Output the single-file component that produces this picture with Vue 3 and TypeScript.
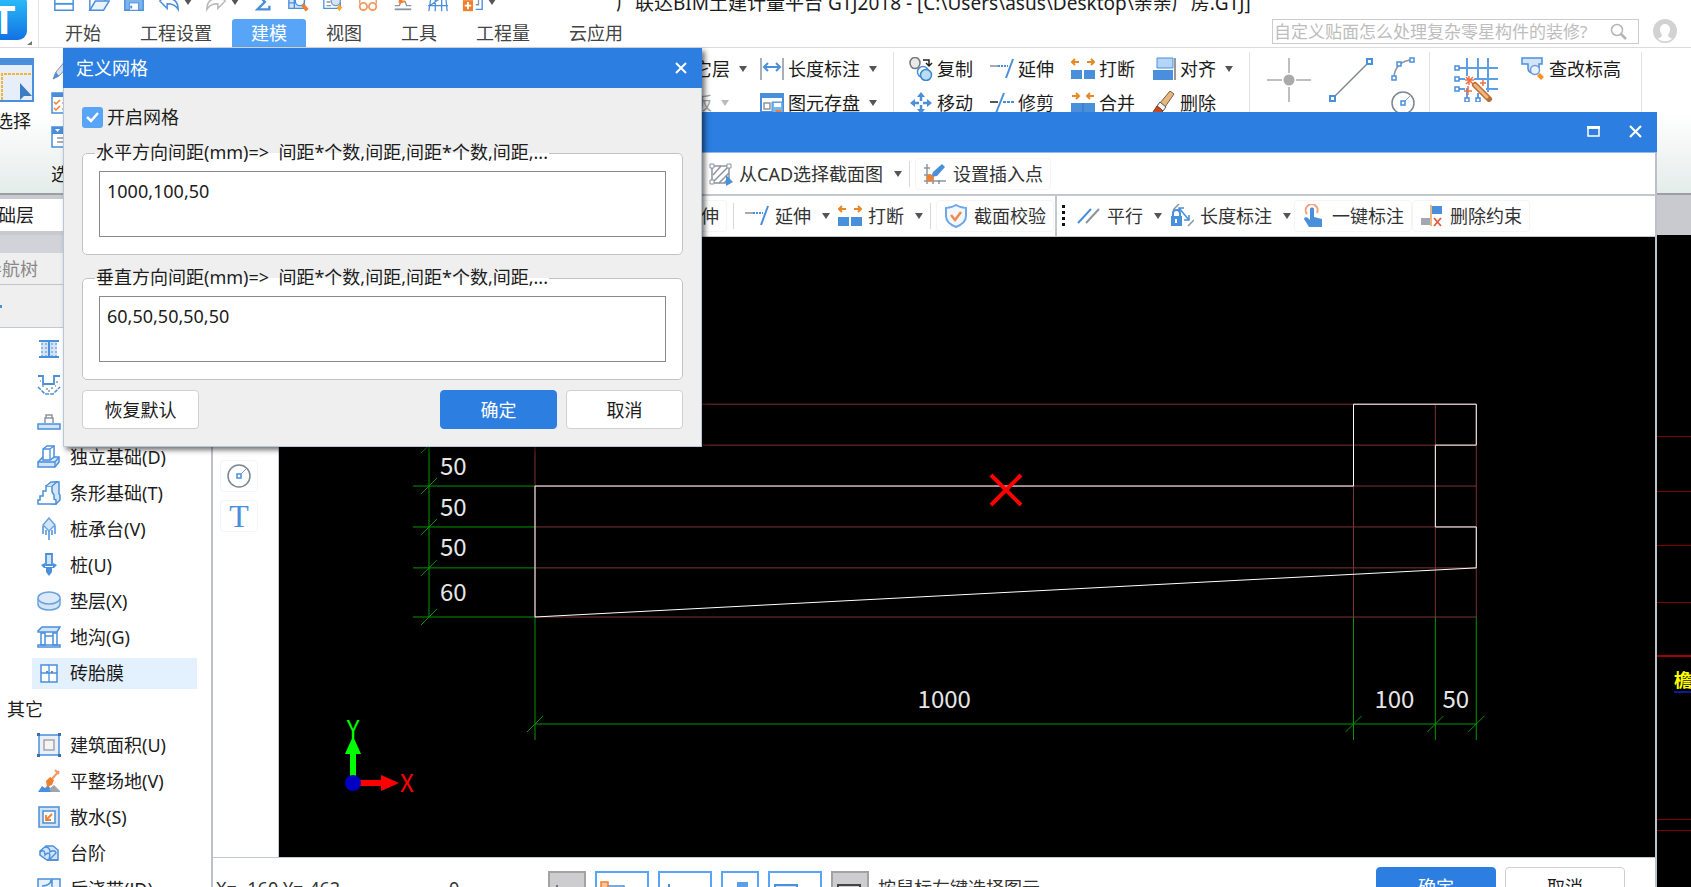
<script setup lang="ts">
import { computed, ref } from 'vue'

interface Tool {
  icon?: string
  label: string
  menu?: boolean
  disabled?: boolean
}

const B = '#4a8fdc'
const L = '#d3e4f7'
const O = '#f07f2e'
const G = '#8c959e'

const nodeSquare = (x: number, y: number) =>
  `<rect x="${x - 2}" y="${y - 2}" width="4" height="4" fill="#fff" stroke="${B}" stroke-width="1.5"/>`

const icons: Record<string, string> = {
  newFile: `<path d="M2 3h20v18H2z" fill="#fff" stroke="${B}" stroke-width="1.6"/><path d="M2 14h20" stroke="${B}" stroke-width="2"/>`,
  open: `<path d="M2 21V3h9l2 4h6v4" fill="none" stroke="${B}" stroke-width="1.6"/><path d="M2 21l6-10h15l-6 10z" fill="#eaf3fc" stroke="${B}" stroke-width="1.6"/>`,
  save: `<path d="M2 2h20v19H2z" fill="#7db4ee" stroke="${B}" stroke-width="1.6"/><path d="M7 13h10v8H7z" fill="#fff" stroke="${B}"/><path d="M9 16v3" stroke="${B}" stroke-width="2"/>`,
  undo: `<path d="M22 20c0-8-4-12-12-12V3L2 11l8 8v-5c5 0 9 1 12 6z" fill="#fff" stroke="${B}" stroke-width="1.6"/>`,
  redo: `<path d="M2 20c0-8 4-12 12-12V3l8 8-8 8v-5c-5 0-9 1-12 6z" fill="#fff" stroke="#b8b8b8" stroke-width="1.6"/>`,
  sum: `<path d="M19 6V3H6l8 9-8 8h13v-4" fill="none" stroke="${B}" stroke-width="2.6"/>`,
  tableFind: `<path d="M2 2h17v17H2zM2 13h17M8 2v17" fill="${L}" stroke="${B}" stroke-width="1.5"/><circle cx="14" cy="11" r="5" fill="#fff" stroke="${B}" stroke-width="1.5"/><path d="M17 15l5 6" stroke="${O}" stroke-width="4"/>`,
  docFind: `<path d="M2 2h18v17H2z" fill="#fff" stroke="${B}" stroke-width="1.4"/><path d="M5 8h5M5 12h4M5 16h5" stroke="${G}" stroke-width="1.5"/><circle cx="15" cy="11" r="5" fill="${L}" stroke="#7a9cc8" stroke-width="1.5"/><path d="M19 15l3 3-3 4-3-4z" fill="#f5a623"/>`,
  glasses: `<path d="M3 8V2h18v6" fill="none" stroke="#b8b8b8"/><circle cx="7" cy="17" r="4" fill="#fff" stroke="#f29a63" stroke-width="2"/><circle cx="17" cy="17" r="4" fill="#fff" stroke="#f29a63" stroke-width="2"/><path d="M3 14V8h4M21 14V8h-4" fill="none" stroke="#f29a63" stroke-width="1.5"/>`,
  stamp: `<path d="M3 16h5l2-5M21 16h-5l-2-5" fill="none" stroke="${G}" stroke-width="1.5"/><path d="M3 20h18" stroke="${G}" stroke-width="2"/><path d="M8 13l9-11M8 13l1-6M8 13l6-2" fill="none" stroke="${O}" stroke-width="2"/>`,
  mesh: `<path d="M2 22L5 2M9 22V2M16 22V2M22 22L20 2M1 9h22M1 16h22M3 16l13-9" fill="none" stroke="${B}" stroke-width="1.4"/>`,
  addBlock: `<path d="M1 10h11v12H1z" fill="${O}"/><path d="M6.5 12v8M3 16h7" stroke="#fff" stroke-width="2"/><path d="M15 20h7V2" fill="none" stroke="${B}" stroke-width="1.5"/><path d="M15 15h3V5" fill="none" stroke="${G}" stroke-width="1.5"/>`,
  brush: `<path d="M2 22l3-7L15 3l4 4L8 19z" fill="#dfe4ea" stroke="#89929b"/><path d="M2 22l3-7 3 4z" fill="${B}"/>`,
  checks: `<path d="M1 2h22v20H1z" fill="#fff" stroke="${B}" stroke-width="1.5"/><path d="M1 2h22v4H1z" fill="${B}"/><path d="M3 11l2 2 4-4M3 17l2 2 4-4" fill="none" stroke="${O}" stroke-width="1.5"/><path d="M11 12h9M11 18h9" stroke="${G}"/>`,
  listBox: `<path d="M1 2h22v20H1z" fill="#fff" stroke="${B}" stroke-width="1.5"/><path d="M1 2h22v7H1z" fill="${B}"/><path d="M4 4h5l-2.5 3z" fill="#fff"/><path d="M6 13h14M6 17h14" stroke="${G}" stroke-width="1.5"/>`,
  length: `<path d="M1 1v22M23 1v22" stroke="${G}" stroke-width="1.5"/><path d="M5 10h14M8 6l-4 4 4 4M16 6l4 4-4 4" fill="none" stroke="${B}" stroke-width="2"/>`,
  store: `<path d="M1 3h22v18H1z" fill="#fff" stroke="${B}" stroke-width="2"/><path d="M1 2h22v5H1z" fill="${B}"/><path d="M4 12h6v6H4z" fill="none" stroke="${G}" stroke-width="1.5"/><path d="M12 11h11v12H12z" fill="#7db4ee" stroke="${B}"/><path d="M14 12h7v4h-7z" fill="#fff"/><path d="M16 19h5v4h-5z" fill="${O}"/>`,
  copy: `<ellipse cx="6" cy="6" rx="5" ry="5.5" fill="#e8e8e8" stroke="#777" stroke-width="1.5"/><path d="M14 3h6v5M17 6l3 3 3-3" fill="none" stroke="#222" stroke-width="1.5"/><circle cx="14" cy="15" r="5.5" fill="#fff" stroke="${B}" stroke-width="1.5"/><circle cx="17" cy="18" r="5.5" fill="#b9dcf5" stroke="#3d88c9" stroke-width="1.5"/>`,
  move: `<path d="M12 1l4 5h-8zM12 23l4-5h-8zM1 12l5-4v8zM23 12l-5-4v8z" fill="${B}"/><path d="M12 4v6M12 14v6M4 12h6M14 12h6" stroke="${B}" stroke-width="2.5"/>`,
  extend: `<path d="M0 9h8" stroke="#a5abb2" stroke-width="2"/><path d="M8 9h10" stroke="${B}" stroke-width="2" stroke-dasharray="2 1"/><path d="M23 2l-7 19" stroke="${B}" stroke-width="2"/>`,
  trim: `<path d="M0 11h8" stroke="#555" stroke-width="2"/><path d="M13 11h11" stroke="${B}" stroke-width="2" stroke-dasharray="3 1"/><path d="M14 2L6 22" stroke="${B}" stroke-width="2"/>`,
  split: `<path d="M0 13h11v9H0zM13 13h11v9H13z" fill="${B}"/><path d="M1 5h7M4 2L1 5l3 3M16 5h7M20 2l3 3-3 3" fill="none" stroke="#e58a24" stroke-width="2"/>`,
  merge: `<path d="M0 12h24v10H0z" fill="${B}"/><path d="M12 12v10" stroke="#2e74c2"/><path d="M1 5h7M5 2l3 3-3 3M16 5h7M19 2l-3 3 3 3" fill="none" stroke="#e58a24" stroke-width="2"/>`,
  align: `<path d="M5 1h16v10H5z" fill="#b5d5f7" stroke="${B}"/><path d="M1 13h20v10H1z" fill="${B}"/><path d="M23 1v22" stroke="#777" stroke-width="1.5"/>`,
  erase: `<path d="M18 0l4 3-9 13-5-4z" fill="#e4b981" stroke="#7d5a35"/><path d="M8 11l6 5-3 4-6-5z" fill="#f3f3f3" stroke="#555"/><path d="M5 15l6 5-3 3H3l-2-2z" fill="#c84a20" stroke="#8a3318"/>`,
  arc: `<path d="M3 21C3 11 10 3 22 3" fill="none" stroke="${G}" stroke-width="1.5"/>${nodeSquare(3, 21)}${nodeSquare(8, 7)}${nodeSquare(21, 3)}`,
  circle: `<circle cx="12" cy="12" r="11" fill="none" stroke="#7c8790" stroke-width="1.5"/><path d="M12 12l7-7" stroke="#6ea9e6"/>${nodeSquare(12, 12)}`,
  level: `<path d="M1 1h20v6h-3v6c0 6-10 4-11-1V7H1z" fill="${L}" stroke="${B}" stroke-width="1.5"/><circle cx="14" cy="13" r="4.5" fill="#e9f2fc" stroke="#6f9fd8" stroke-width="1.5"/><path d="M19 16l4 4-3 3-4-4z" fill="#f5921e"/>`,
  hatch: `<path d="M3 4h17v17H3z" fill="#fff" stroke="${G}" stroke-width="1.5"/><path d="M4 13l8-9M4 20L19 5M10 21l10-10M15 21l5-5" stroke="${G}" stroke-width="1.5"/><path d="M1 2h4v4H1zM18 2h4v4h-4zM1 18h4v4H1z" fill="#fff" stroke="${G}"/><path d="M17 13l7 7-7 4z" fill="${B}"/>`,
  insert: `<path d="M4 2v20M10 14v8M16 18v4M1 6h6M1 19h22M1 13h7" stroke="${G}" stroke-width="1.5"/><path d="M8 15l2-5L19 2l3 3-8 9z" fill="${B}"/><circle cx="7" cy="16" r="3.5" fill="${O}"/>`,
  shield: `<path d="M12 1c3 2 6 3 10 3v8c0 5-5 9-10 11C7 21 2 17 2 12V4c4 0 7-1 10-3z" fill="#f3f8fe" stroke="#6fa8e6" stroke-width="2"/><path d="M7 11l4 5 6-8" fill="none" stroke="#f28a4c" stroke-width="2.5"/>`,
  parallel: `<path d="M1 19L14 5" stroke="${B}" stroke-width="2"/><path d="M9 19L22 5" stroke="${G}" stroke-width="2"/>`,
  lockLength: `<path d="M1 12h11v10H1z" fill="${B}"/><path d="M3 12V9c0-4 7-4 7 0v3" fill="none" stroke="${B}" stroke-width="2"/><path d="M6 15v4" stroke="#fff" stroke-width="2"/><path d="M9 4l10 12M9 8V4h5M19 11v5h-5" fill="none" stroke="${B}" stroke-width="1.5"/><path d="M3 6l6-6M18 22l6-6" stroke="${G}" stroke-width="1.5"/>`,
  tap: `<path d="M5 10a6 6 0 1 1 10-1" fill="none" stroke="#f3a27a" stroke-width="2"/><path d="M8 5c0-2 4-2 4 0v8l8 2v8H7l-5-8c0-2 3-2 4-1l2 2z" fill="${B}"/>`,
  unbind: `<path d="M12 2h10v8H12z" fill="${B}"/><path d="M1 14h9v7H1z" fill="#a3a8b0"/><path d="M11 1v21" stroke="#e0a050" stroke-width="1.5"/><path d="M14 14l7 8M21 14l-7 8" stroke="#e8583c" stroke-width="1.8"/>`,
  wall: `<path d="M2 4h20M2 20h20" stroke="${B}" stroke-width="2"/><path d="M4 5h16v14H4z" fill="${L}"/><path d="M12 4v16" stroke="${B}" stroke-width="2"/><path d="M5 6v13M9 6v13M15 6v13M19 6v13" stroke="${B}" stroke-dasharray="2 2"/>`,
  pit: `<path d="M1 3h5v8h11V3h6" fill="none" stroke="${B}" stroke-width="1.8"/><path d="M1 14l7 7h8l7-7" fill="none" stroke="${B}" stroke-width="1.5" stroke-dasharray="4 1"/><path d="M3 8h1M5 13h2M9 16h2M14 15h2M19 9h2M18 13h1M11 18h2" stroke="${G}" stroke-width="1.5"/>`,
  strip: `<path d="M1 15h22v5H1z" fill="${L}" stroke="${B}" stroke-width="1.5"/><path d="M8 14V9h8v5M9 9V6h6v3" fill="none" stroke="${G}" stroke-width="1.5"/>`,
  isolated: `<path d="M1 17l5-5h16v5l-4 5H1z" fill="${L}" stroke="${B}" stroke-width="1.5"/><path d="M6 15V4l4-3h7v11l-4 3z" fill="#fff" stroke="${B}" stroke-width="1.5"/><path d="M6 4h7v11M13 4l4-3M1 17h17v5M18 17l4-5" fill="none" stroke="${B}" stroke-width="1.3"/>`,
  ribbonBase: `<path d="M14 4l4-3h4v12l1 1v5l-4 4h-4z" fill="${L}" stroke="${B}" stroke-width="1.5"/><path d="M9 5h6v6l2 3v4l2 1v4H1v-4h2v-4h3v-5h3z" fill="#fff" stroke="${B}" stroke-width="1.5"/><path d="M9 5l5-4h6l-5 4" fill="${L}" stroke="${B}" stroke-width="1.3"/>`,
  cap: `<path d="M12 1l6 7-6 6-6-6z" fill="${L}" stroke="#6ba3df" stroke-width="1.5"/><path d="M6 9v8M18 9v8M12 14v9M9 13v5M15 13v5" stroke="${B}" stroke-width="1.5"/>`,
  pile: `<path d="M9 1h6v11H9z" fill="${L}" stroke="${B}" stroke-width="1.8"/><path d="M4 12l4-2v4h8v-4l4 2-3 3h-2v4l-3 4-3-4v-4H7z" fill="${B}"/>`,
  cushion: `<path d="M1 10v5c0 8 22 8 22 0v-5" fill="${L}" stroke="#6ba3df" stroke-width="1.5"/><ellipse cx="12" cy="9" rx="11" ry="6" fill="#dce9f8" stroke="#6ba3df" stroke-width="1.5"/>`,
  trench: `<path d="M1 6l4-4h18l-3 5H1z" fill="${L}" stroke="${B}" stroke-width="1.5"/><path d="M4 8h4v12H4zM16 8h4v12h-4z" fill="#fff" stroke="${B}" stroke-width="1.5"/><path d="M1 22v-2h22v2zM8 11h8" fill="none" stroke="${B}" stroke-width="1.5"/>`,
  brick: `<path d="M4 4h16v17H4z" fill="#fff" stroke="${B}" stroke-width="1.5"/><path d="M12 4v17M4 12h16" stroke="${B}" stroke-width="1.3"/><path d="M9 11h2M14 11h2" stroke="${B}" stroke-width="2"/>`,
  area: `<path d="M2 2h20v20H2z" fill="#e8f1fb" stroke="${B}" stroke-width="1.5"/><path d="M7 7h10v10H7z" fill="#f4f4f4" stroke="#a5a5a5" stroke-width="1.5"/><path d="M0 0h3v3H0zM21 0h3v3h-3zM0 21h3v3H0zM21 21h3v3h-3z" fill="#3d6fb0"/>`,
  ground: `<path d="M1 23l4-6 3 2 3-3 5 7z" fill="${B}"/><path d="M12 20l5-4 6 6v1H14z" fill="#a0a4a8"/><path d="M22 2l-8 9M18 1l4 4" stroke="#f29a63" stroke-width="2"/><path d="M9 12l4-4 4 3-2 5-5 2z" fill="${O}"/>`,
  apron: `<path d="M2 2h20v20H2z" fill="${L}" stroke="${B}" stroke-width="1.5"/><path d="M6 6h12v12H6z" fill="#fff" stroke="${B}" stroke-width="1.5"/><path d="M15 9l-5 5M9 10v5h5" fill="none" stroke="${O}" stroke-width="1.8"/>`,
  steps: `<path d="M3 10l6-5h7l5 4v10H10l-7-5z" fill="${L}" stroke="${B}" stroke-width="1.5"/><path d="M3 11c4-3 5 0 5 3 4-4 6-1 4 4M8 6c3 0 5 2 5 5 4-3 6 0 6 1l-6 6M10 19h11" fill="none" stroke="${B}" stroke-width="1.4"/>`,
  band: `<path d="M1 2h22v20H1z" fill="#e8f1fb" stroke="${B}" stroke-width="1.5"/><path d="M15 2v20M5 9c6 0 9-3 9-6" fill="none" stroke="${B}" stroke-width="1.5"/>`,
}

const tabs = ['开始', '工程设置', '建模', '视图', '工具', '工程量', '云应用']
const activeTab = ref('建模')

const quickTools = [
  { icon: 'newFile', label: '新建' },
  { icon: 'open', label: '打开' },
  { icon: 'save', label: '保存' },
  { icon: 'undo', label: '撤销', menu: true },
  { icon: 'redo', label: '恢复', menu: true },
  { icon: 'sum', label: '汇总' },
  { icon: 'tableFind', label: '查看表格' },
  { icon: 'docFind', label: '查看工程量' },
  { icon: 'glasses', label: '查看' },
  { icon: 'stamp', label: '标记' },
  { icon: 'mesh', label: '轴网' },
  { icon: 'addBlock', label: '添加', menu: true },
]

const floorTools: Tool[] = [
  { label: '它层', menu: true },
  { icon: 'length', label: '长度标注', menu: true },
  { label: '板', menu: true, disabled: true },
  { icon: 'store', label: '图元存盘', menu: true },
]
const editTools: Tool[] = [
  { icon: 'copy', label: '复制' },
  { icon: 'extend', label: '延伸' },
  { icon: 'split', label: '打断' },
  { icon: 'align', label: '对齐', menu: true },
  { icon: 'move', label: '移动' },
  { icon: 'trim', label: '修剪' },
  { icon: 'merge', label: '合并' },
  { icon: 'erase', label: '删除' },
]

const treeTop = [
  { icon: 'wall', label: '' },
  { icon: 'pit', label: '' },
  { icon: 'strip', label: '' },
  { icon: 'isolated', label: '独立基础(D)' },
  { icon: 'ribbonBase', label: '条形基础(T)' },
  { icon: 'cap', label: '桩承台(V)' },
  { icon: 'pile', label: '桩(U)' },
  { icon: 'cushion', label: '垫层(X)' },
  { icon: 'trench', label: '地沟(G)' },
  { icon: 'brick', label: '砖胎膜' },
]
const treeOther = [
  { icon: 'area', label: '建筑面积(U)' },
  { icon: 'ground', label: '平整场地(V)' },
  { icon: 'apron', label: '散水(S)' },
  { icon: 'steps', label: '台阶' },
  { icon: 'band', label: '后浇带(JD)' },
]
const activeNode = ref('砖胎膜')

const gridOn = ref(true)
const horizontal = ref('1000,100,50')
const vertical = ref('60,50,50,50,50')

// Drawing geometry: the spacing lists are scaled from an origin at the lower left.
const scale = 0.8185
const origin = { x: 256, y: 380 }
const parse = (s: string) => s.split(',').map(Number).filter((n) => n > 0)
const stops = (list: number[]) => list.reduce<number[]>((acc, n) => [...acc, acc[acc.length - 1] + n], [0])

const xList = computed(() => parse(horizontal.value))
const yList = computed(() => parse(vertical.value))
const xs = computed(() => stops(xList.value).map((n) => origin.x + n * scale))
const ys = computed(() => stops(yList.value).map((n) => origin.y - n * scale))
const xEnd = computed(() => xs.value[xs.value.length - 1])
const yEnd = computed(() => ys.value[ys.value.length - 1])

const profile = [[0, 0], [0, 160], [1000, 160], [1000, 260], [1150, 260], [1150, 210], [1100, 210], [1100, 110], [1150, 110], [1150, 60]]
const outline = profile.map(([x, y]) => `${origin.x + x * scale},${origin.y - y * scale}`).join(' ')

const siteLines = [201, 256, 310, 367, 420, 421, 584, 595]
</script>

<template>
  <div class="app">
    <header class="top">
      <button class="logo" aria-label="主菜单">
        <svg width="34" height="47" viewBox="0 0 34 47">
          <defs>
            <linearGradient id="logoFill" x1="0" y1="0" x2="0" y2="1">
              <stop offset="0" stop-color="#2cc4fa" />
              <stop offset="1" stop-color="#1272e4" />
            </linearGradient>
          </defs>
          <rect x="-16" y="-6" width="43" height="46" rx="9" fill="url(#logoFill)" />
          <text x="4" y="34" text-anchor="middle" class="logo-letter">T</text>
          <path d="M32 41v4h-5z" fill="#777" />
        </svg>
      </button>
      <div class="top-main">
        <div class="title-row">
          <div class="quick">
            <button v-for="t in quickTools" :key="t.icon" class="quick-btn" :class="{ wide: t.menu }" :aria-label="t.label">
              <svg width="22" height="22" viewBox="0 0 24 24" v-html="icons[t.icon]"></svg>
              <i v-if="t.menu" class="caret"></i>
            </button>
          </div>
          <div class="doc-title">广联达BIM土建计量平台 GTJ2018 - [C:\Users\asus\Desktop\亲亲厂房.GTJ]</div>
        </div>
        <div class="tab-row">
          <nav class="tabs">
            <button v-for="t in tabs" :key="t" class="tab" :class="{ active: t === activeTab }" @click="activeTab = t">{{ t }}</button>
          </nav>
          <div class="search">
            <input type="text" aria-label="搜索" placeholder="自定义贴面怎么处理复杂零星构件的装修?" />
            <svg width="18" height="18" viewBox="0 0 18 18" fill="none" stroke="#b5b5b5"><circle cx="7" cy="7" r="5.5" stroke-width="1.5" /><path d="M11 11l5 5" stroke-width="2.5" /></svg>
          </div>
          <button class="user" aria-label="用户">
            <svg width="24" height="24" viewBox="0 0 24 24"><circle cx="12" cy="12" r="12" fill="#d2d2d2" /><path d="M12 5a5 5 0 0 0-5 5c0 3 1 4 2 6 0 2-3 3-4 4a12 12 0 0 0 14 0c-1-1-4-2-4-4 1-2 2-3 2-6a5 5 0 0 0-5-5z" fill="#fff" /></svg>
          </button>
        </div>
      </div>
    </header>

    <section class="ribbon">
      <button class="select-btn">
        <svg width="34" height="44" viewBox="0 0 34 44">
          <rect x="-10" y="1" width="43" height="42" fill="#e6eefa" stroke="#4a8fdc" stroke-width="2" />
          <rect x="-10" y="0" width="44" height="7" fill="#4a8fdc" />
          <path d="M2 42V16h30" fill="none" stroke="#f2b632" stroke-width="2" stroke-dasharray="3 1" />
          <path d="M20 25v17l4-4h8z" fill="#3c7cc4" />
        </svg>
        <span>选择</span>
      </button>
      <div class="mini-col">
        <button v-for="n in ['brush', 'checks', 'listBox']" :key="n" class="tool" :aria-label="n">
          <svg width="24" height="24" viewBox="0 0 24 24" v-html="icons[n]"></svg>
        </button>
        <span class="group-name">选择</span>
      </div>
      <div class="group floor-group">
        <button v-for="t in floorTools" :key="t.label" class="tool" :class="{ off: t.disabled }" :disabled="t.disabled">
          <svg v-if="t.icon" width="24" height="24" viewBox="0 0 24 24" v-html="icons[t.icon]"></svg>
          <span>{{ t.label }}</span>
          <i v-if="t.menu" class="caret"></i>
        </button>
      </div>
      <div class="group edit-group">
        <button v-for="t in editTools" :key="t.label" class="tool">
          <svg width="24" height="24" viewBox="0 0 24 24" v-html="icons[t.icon!]"></svg>
          <span>{{ t.label }}</span>
          <i v-if="t.menu" class="caret"></i>
        </button>
      </div>
      <div class="group draw-group">
        <button class="big" aria-label="点">
          <svg width="44" height="44" viewBox="0 0 44 44"><path d="M22 0v15M22 29v15M0 22h15M29 22h15" stroke="#aaa" stroke-width="1.5" /><circle cx="22" cy="22" r="5.5" fill="#aaa" /></svg>
        </button>
        <button class="big" aria-label="直线">
          <svg width="44" height="44" viewBox="0 0 44 44"><path d="M3 41L41 3" stroke="#7c8790" stroke-width="1.5" /><path d="M1 38h5v5H1zM38 1h5v5h-5z" fill="#fff" stroke="#4a8fdc" stroke-width="2" /></svg>
        </button>
        <div class="draw-col">
          <button class="tool" aria-label="弧"><svg width="24" height="24" viewBox="0 0 24 24" v-html="icons.arc"></svg></button>
          <button class="tool" aria-label="圆"><svg width="24" height="24" viewBox="0 0 24 24" v-html="icons.circle"></svg></button>
        </div>
      </div>
      <div class="group level-group">
        <button class="big" aria-label="智能布置">
          <svg width="44" height="44" viewBox="0 0 44 44">
            <path d="M13 0v18M13 30v10M24 0v20M24 35v5M34 0v34M4 10h40M4 21h7M20 21h24M4 31h7M32 31h12" stroke="#5c9fe8" stroke-width="2" />
            <path d="M1 8h4v4H1zM1 19h4v4H1zM1 29h4v4H1zM11 40h4v4h-4zM22 40h4v4h-4z" fill="#fff" stroke="#4a8fdc" stroke-width="1.5" />
            <path d="M15 18v9M11 22h9M12 19l7 7M19 19l-7 7M29 22v6M26 25h6M14 28v9M10 33h8" stroke="#f07040" stroke-width="1.5" />
            <path d="M21 27l14 14" stroke="#b96f35" stroke-width="6" stroke-linecap="round" /><path d="M21 27l12 12" stroke="#f2b57c" stroke-width="3" stroke-linecap="round" />
          </svg>
        </button>
        <button class="tool"><svg width="24" height="24" viewBox="0 0 24 24" v-html="icons.level"></svg><span>查改标高</span></button>
      </div>
    </section>

    <div class="floor-strip"><div class="floor-pick">基础层</div></div>

    <div class="work">
      <aside class="side">
        <div class="side-head">导航树</div>
        <div class="side-bar"><i></i></div>
        <ul class="tree">
          <li v-for="n in treeTop" :key="n.icon">
            <button class="node" :class="{ active: n.label === activeNode }" :aria-label="n.label || n.icon" @click="activeNode = n.label">
              <svg width="24" height="24" viewBox="0 0 24 24" v-html="icons[n.icon]"></svg><span>{{ n.label }}</span>
            </button>
          </li>
          <li class="branch">其它</li>
          <li v-for="n in treeOther" :key="n.icon">
            <button class="node" :class="{ active: n.label === activeNode }" @click="activeNode = n.label">
              <svg width="24" height="24" viewBox="0 0 24 24" v-html="icons[n.icon]"></svg><span>{{ n.label }}</span>
            </button>
          </li>
        </ul>
      </aside>
      <svg class="site" width="100%" height="100%">
        <line v-for="y in siteLines" :key="y" x1="0" x2="100%" :y1="y + 0.5" :y2="y + 0.5" :class="{ strong: y > 400 && y < 430 }" />
        <text x="1463" y="452" class="site-text">檐</text>
        <path d="M1463 457h60" stroke="#0a1c90" stroke-width="2" />
      </svg>
    </div>

    <section class="editor">
      <div class="bar">
        <button aria-label="最大化"><svg width="14" height="14" viewBox="0 0 14 14"><path d="M1 2h11v9H1z" fill="none" stroke="#fff" stroke-width="1.5" /><path d="M0 1h13v3H0z" fill="#fff" /></svg></button>
        <button aria-label="关闭"><svg width="14" height="14" viewBox="0 0 14 14"><path d="M1 1l11 11M12 1L1 12" stroke="#fff" stroke-width="2.2" /></svg></button>
      </div>
      <div class="tools tools-a">
        <button class="tool drop"><svg width="24" height="24" viewBox="0 0 24 24" v-html="icons.hatch"></svg><span>从CAD选择截面图</span><i class="caret"></i></button>
        <b class="sep"></b>
        <button class="tool framed"><svg width="24" height="24" viewBox="0 0 24 24" v-html="icons.insert"></svg><span>设置插入点</span></button>
      </div>
      <div class="tools tools-b">
        <button class="tool framed"><span>拉伸</span></button>
        <b class="sep"></b>
        <button class="tool drop"><svg width="24" height="24" viewBox="0 0 24 24" v-html="icons.extend"></svg><span>延伸</span><i class="caret"></i></button>
        <button class="tool drop"><svg width="24" height="24" viewBox="0 0 24 24" v-html="icons.split"></svg><span>打断</span><i class="caret"></i></button>
        <b class="sep"></b>
        <button class="tool framed"><svg width="24" height="24" viewBox="0 0 24 24" v-html="icons.shield"></svg><span>截面校验</span></button>
        <b class="divider"></b>
        <b class="grip"></b>
        <button class="tool drop"><svg width="24" height="24" viewBox="0 0 24 24" v-html="icons.parallel"></svg><span>平行</span><i class="caret"></i></button>
        <button class="tool drop"><svg width="24" height="24" viewBox="0 0 24 24" v-html="icons.lockLength"></svg><span>长度标注</span><i class="caret"></i></button>
        <button class="tool framed after-drop"><svg width="24" height="24" viewBox="0 0 24 24" v-html="icons.tap"></svg><span>一键标注</span></button>
        <button class="tool framed"><svg width="24" height="24" viewBox="0 0 24 24" v-html="icons.unbind"></svg><span>删除约束</span></button>
      </div>
      <div class="stage">
        <div class="palette">
          <button class="pal" aria-label="圆"><svg width="24" height="24" viewBox="0 0 24 24" v-html="icons.circle"></svg></button>
          <button class="pal letter">T</button>
        </div>
        <svg class="cad" width="100%" height="100%">
          <g v-if="gridOn" class="grid">
            <line v-for="(x, i) in xs" :key="'x' + i" :x1="x" :x2="x" :y1="origin.y" :y2="yEnd" />
            <line v-for="(y, i) in ys" :key="'y' + i" :x1="origin.x" :x2="xEnd" :y1="y" :y2="y" />
          </g>
          <g class="dim">
            <line :x1="origin.x - 106" :x2="origin.x - 106" :y1="origin.y" :y2="yEnd" />
            <line :x1="origin.x" :x2="xEnd" :y1="origin.y + 107" :y2="origin.y + 107" />
            <template v-for="(y, i) in ys" :key="'dy' + i">
              <line :x1="origin.x - 122" :x2="origin.x" :y1="y" :y2="y" />
              <line :x1="origin.x - 114" :x2="origin.x - 98" :y1="y + 8" :y2="y - 8" />
            </template>
            <template v-for="(x, i) in xs" :key="'dx' + i">
              <line :x1="x" :x2="x" :y1="origin.y" :y2="origin.y + 123" />
              <line :x1="x - 8" :x2="x + 8" :y1="origin.y + 115" :y2="origin.y + 99" />
            </template>
          </g>
          <g class="dim-text">
            <text v-for="(n, i) in yList" :key="'ty' + i" :x="origin.x - 95" :y="(ys[i] + ys[i + 1]) / 2 + 9">{{ n }}</text>
            <text v-for="(n, i) in xList" :key="'tx' + i" :x="(xs[i] + xs[i + 1]) / 2" :y="origin.y + 91" text-anchor="middle">{{ n }}</text>
          </g>
          <polygon :points="outline" class="outline" />
          <path d="M712 238l30 30M742 238l-30 30" stroke="#f00" stroke-width="4" />
          <path d="M71 539v-22h-5l8-18 8 18h-5v22z" fill="#0f0" />
          <path d="M80 543h22v-5l18 8-18 8v-5H80z" fill="#f00" />
          <circle cx="74" cy="546" r="8" fill="#0000c0" />
          <text x="74" y="501" text-anchor="middle" class="axis axis-y">Y</text>
          <text x="128" y="555" text-anchor="middle" class="axis axis-x">X</text>
        </svg>
      </div>
      <div class="status">
        <span class="coords">X= -160 Y=-462</span>
        <span class="snap">0</span>
        <div class="toggles">
          <button class="tg gray" aria-label="正交"><svg width="36" height="20"><path d="M8 10v10" stroke="#555" stroke-width="1.5" /></svg></button>
          <button class="tg wide" aria-label="对象捕捉"><svg width="52" height="20"><path d="M8 20v-9h20v9" fill="none" stroke="#4a8fdc" stroke-width="1.5" /><path d="M5 7h7v8H5z" fill="#fbc49c" stroke="#f07f2e" stroke-width="1.5" /></svg></button>
          <button class="tg wide" aria-label="动态输入"><svg width="52" height="20"><path d="M10 9v9M5 14h10" stroke="#4a8fdc" stroke-width="2" /></svg></button>
          <button class="tg" aria-label="图层"><svg width="36" height="20"><path d="M15 7h11v13H15z" fill="#5c9fe8" /></svg></button>
          <button class="tg wide" aria-label="线宽"><svg width="52" height="20"><path d="M6 10h22v10H6z" fill="#d3e4f7" stroke="#4a8fdc" stroke-width="2" /><path d="M12 16l4 3 5-6" fill="none" stroke="#4a8fdc" /></svg></button>
          <button class="tg gray" aria-label="底图"><svg width="36" height="20"><path d="M6 10h22v10H6z" fill="#ccc" stroke="#444" stroke-width="2" /><path d="M12 16l3 3 6-7" fill="none" stroke="#333" /></svg></button>
        </div>
        <span class="hint">按鼠标左键选择图元</span>
        <button class="btn primary">确定</button>
        <button class="btn">取消</button>
      </div>
    </section>

    <form class="dialog" role="dialog" aria-label="定义网格" @submit.prevent>
      <div class="dialog-bar">
        <span>定义网格</span>
        <button type="button" aria-label="关闭"><svg width="12" height="12" viewBox="0 0 12 12"><path d="M1 1l10 10M11 1L1 11" stroke="#fff" stroke-width="2" /></svg></button>
      </div>
      <div class="dialog-body">
        <label class="check">
          <input v-model="gridOn" type="checkbox" />
          <svg width="21" height="21" viewBox="0 0 21 21"><path d="M5 10l4 4 7-8" fill="none" stroke="#fff" stroke-width="2.5" /></svg>
          <span>开启网格</span>
        </label>
        <fieldset>
          <legend id="legend-h">水平方向间距(mm)=&gt;&nbsp; 间距*个数,间距,间距*个数,间距,...</legend>
          <textarea v-model="horizontal" aria-labelledby="legend-h"></textarea>
        </fieldset>
        <fieldset>
          <legend id="legend-v">垂直方向间距(mm)=&gt;&nbsp; 间距*个数,间距,间距*个数,间距,...</legend>
          <textarea v-model="vertical" aria-labelledby="legend-v"></textarea>
        </fieldset>
        <div class="actions">
          <button type="button" class="btn">恢复默认</button>
          <button type="submit" class="btn primary">确定</button>
          <button type="button" class="btn">取消</button>
        </div>
      </div>
    </form>
  </div>
</template>

<style>
html,
body {
  height: 100%;
  overflow: hidden;
}
#app {
  height: 100%;
}
</style>

<style scoped>
.app {
  position: relative;
  display: flex;
  flex-direction: column;
  height: 100%;
  overflow: hidden;
  background: #fff;
  color: #1c1c1c;
  font: 18px/24px 'Noto Sans', 'Noto Sans CJK SC', sans-serif;
}
.app * {
  box-sizing: border-box;
}
button {
  margin: 0;
  padding: 0;
  border: 0;
  background: none;
  color: inherit;
  font: inherit;
  white-space: nowrap;
  cursor: pointer;
}
svg {
  display: block;
  flex: none;
}
.caret {
  flex: none;
  width: 0;
  border: 4px solid transparent;
  border-top: 6px solid #555;
  border-bottom: 0;
}

/* title and tabs */
.top {
  display: flex;
  flex: none;
  height: 48px;
  border-bottom: 1px solid #dcdcdc;
}
.logo {
  flex: none;
  width: 39px;
  border-right: 1px solid #e4e4e4;
}
.logo-letter {
  fill: #fff;
  font-weight: 700;
  font-size: 40px;
}
.top-main {
  flex: 1;
  min-width: 0;
}
.title-row {
  display: flex;
  align-items: flex-end;
  height: 16px;
  overflow: hidden;
}
.quick {
  display: flex;
  flex: none;
  align-items: flex-end;
  gap: 13px;
  width: 577px;
  padding: 0 0 3px 14px;
}
.quick-btn {
  display: flex;
  align-items: center;
  gap: 4px;
}
.doc-title {
  height: 25px;
  font-size: 19px;
  white-space: nowrap;
}
.tab-row {
  display: flex;
  align-items: flex-start;
  height: 31px;
  padding: 3px 30px 0 7px;
}
.tabs {
  display: flex;
  flex: 1;
  gap: 1px;
}
.tab {
  height: 28px;
  padding: 0 19px;
  line-height: 28px;
  color: #444;
}
.tab.active {
  border-radius: 3px 3px 0 0;
  background: #58a5f7;
  color: #fff;
}
.search {
  display: flex;
  align-items: center;
  width: 367px;
  height: 25px;
  padding: 0 10px 0 1px;
  border: 1px solid #ccc;
}
.search input {
  flex: 1;
  min-width: 0;
  padding: 0;
  border: 0;
  outline: 0;
  font: 17px/22px 'Noto Sans', 'Noto Sans CJK SC', sans-serif;
}
.search input::placeholder {
  color: #bdbdbd;
}
.user {
  width: 24px;
  margin-left: 14px;
  margin-right: -16px;
}

/* ribbon */
.ribbon {
  display: flex;
  flex: none;
  height: 145px;
  padding-top: 4px;
  overflow: hidden;
  background: linear-gradient(#fff 45%, #e4ecea);
}
.select-btn {
  display: flex;
  flex: none;
  flex-direction: column;
  align-items: center;
  gap: 7px;
  width: 26px;
  padding-top: 6px;
}
.select-btn svg {
  align-self: flex-start;
}
.mini-col {
  display: flex;
  flex: none;
  flex-direction: column;
  width: 24px;
  margin-left: 25px;
}
.group-name {
  margin-top: 8px;
  white-space: nowrap;
}
.tool {
  display: flex;
  align-items: center;
  gap: 4px;
  height: 34px;
}
.tool .caret {
  margin-left: 5px;
}
.tool.off {
  opacity: 0.4;
}
.group {
  display: flex;
  flex: none;
  border-right: 1px solid #e0e4e4;
}
.floor-group,
.edit-group {
  display: grid;
  align-content: start;
}
.floor-group {
  grid-template-columns: 66px auto;
  margin-left: 619px;
  padding-right: 16px;
}
.edit-group {
  grid-template-columns: repeat(4, auto);
  column-gap: 17px;
  padding: 0 16px 0 15px;
}
.draw-group {
  gap: 18px;
  padding: 0 14px 0 17px;
}
.big {
  height: 44px;
  margin-top: 6px;
}
.level-group {
  align-items: flex-start;
  gap: 23px;
  padding: 0 20px 0 24px;
}
.floor-strip {
  flex: none;
  height: 42px;
  padding: 4px 0;
  border-top: 2px solid #9b9fa3;
  background: #c8cad0;
}
.floor-pick {
  display: flex;
  justify-content: flex-end;
  align-items: center;
  width: 34px;
  height: 32px;
  background: #fff;
  box-shadow: 30px 0 0 #fff;
  white-space: nowrap;
}

/* navigation tree */
.work {
  display: flex;
  flex: 1;
  min-height: 0;
}
.side {
  flex: none;
  width: 211px;
  padding-top: 18px;
  overflow: hidden;
  background: #d2d3d8;
}
.side-head {
  display: flex;
  justify-content: flex-end;
  align-items: center;
  height: 32px;
  padding-right: 173px;
  border-bottom: 1px solid #c4c4c4;
  background: #efefef;
  color: #888;
  white-space: nowrap;
}
.side-bar {
  display: flex;
  align-items: center;
  height: 43px;
  border-bottom: 1px solid #c4c8d0;
  background: #efefef;
}
.side-bar i {
  width: 2px;
  height: 3px;
  background: #4a8fdc;
}
.tree {
  min-height: 100%;
  margin: 0;
  padding: 3px 0 0;
  background: #fff;
  list-style: none;
}
.tree li {
  display: flex;
  align-items: center;
  height: 36px;
}
.tree .branch {
  padding-left: 7px;
}
.node {
  display: flex;
  align-items: center;
  gap: 9px;
  width: 165px;
  height: 31px;
  margin-left: 32px;
  padding-left: 5px;
}
.node.active {
  background: #e3f0fe;
}
.site {
  flex: 1;
  min-width: 0;
  background: #000;
}
.site line {
  stroke: #800000;
}
.site line.strong {
  stroke: #a00000;
}
.site-text {
  fill: #ff0;
  font-size: 18px;
  font-weight: 700;
}

/* section editor window */
.editor {
  position: absolute;
  top: 112px;
  right: 34px;
  bottom: 0;
  left: 211px;
  display: flex;
  flex-direction: column;
  border: solid #bcc0ca;
  border-width: 0 2px;
  background: #fff;
}
.bar {
  display: flex;
  flex: none;
  justify-content: flex-end;
  align-items: center;
  gap: 28px;
  height: 41px;
  margin: 0 -2px;
  padding-right: 14px;
  border-bottom: 1px solid #94b9e8;
  background: #2c7ee1;
}
.tools {
  display: flex;
  flex: none;
  align-items: center;
  height: 43px;
  border-bottom: 2px solid #c3c7ce;
  color: #333;
}
.tools-a {
  padding-left: 488px;
}
.tools-b {
  height: 41px;
  padding-left: 462px;
  border-bottom-width: 1px;
}
.tools .tool {
  gap: 6px;
  height: 32px;
  padding-left: 8px;
}
.tools .tool.framed {
  padding: 0 7px;
  border: 1px solid #f5f5f5;
  border-radius: 4px;
}
.tools .caret {
  margin-left: 5px;
}
.tools .after-drop {
  margin-left: 3px;
}
.sep {
  width: 1px;
  height: 26px;
  margin: 0 3px 0 6px;
  background: #d8d8d8;
}
.drop + .sep {
  margin: 0 5px 0 7px;
}
.divider {
  align-self: stretch;
  width: 2px;
  margin-left: 1px;
  background: #c3c7ce;
}
.grip {
  width: 3px;
  height: 22px;
  margin: 0 4px 0 5px;
  background: repeating-linear-gradient(#111 0 3px, transparent 3px 6px);
}
.stage {
  display: flex;
  flex: 1;
  min-height: 0;
}
.palette {
  display: flex;
  flex: none;
  flex-direction: column;
  align-items: center;
  gap: 8px;
  width: 66px;
  padding: 223px 13px 0 0;
  border-right: 1px solid #c3c7ce;
}
.pal {
  display: flex;
  justify-content: center;
  align-items: center;
  width: 38px;
  height: 32px;
  border: 1px solid #f5f5f5;
  border-radius: 4px;
}
.letter {
  color: #4a8fdc;
  font: 32px/32px 'Liberation Serif', serif;
}
.cad {
  flex: 1;
  min-width: 0;
  background: #000;
}
.grid line {
  stroke: #7d3234;
}
.dim line {
  stroke: #009600;
}
.dim-text text {
  fill: #e6e6e6;
  font: 24px 'Noto Sans CJK SC', sans-serif;
}
.outline {
  fill: none;
  stroke: #fff;
}
.axis {
  font: 24px 'Noto Sans CJK SC', sans-serif;
}
.axis-y {
  fill: #0f0;
}
.axis-x {
  fill: #f00;
}
.status {
  display: flex;
  flex: none;
  align-items: flex-start;
  height: 30px;
  padding: 9px 30px 0 3px;
  overflow: hidden;
  border-top: 1px solid #c3c7ce;
  color: #333;
}
.coords {
  width: 233px;
  padding-top: 9px;
}
.snap {
  width: 99px;
  padding-top: 9px;
}
.toggles {
  display: flex;
  gap: 9px;
  padding-top: 4px;
}
.tg {
  width: 38px;
  height: 30px;
  border: 2px solid #58a5f7;
}
.tg svg {
  margin: -2px 0 0 -1px;
}
.tg.wide {
  width: 54px;
}
.tg.gray {
  border-color: #a3a3a3;
  background: #cdcdcf;
}
.hint {
  flex: 1;
  padding: 9px 0 0 9px;
}
.btn {
  flex: none;
  width: 120px;
  height: 39px;
  border: 1px solid #d0d0d0;
  border-radius: 4px;
  background: #fff;
  color: #1c1c1c;
}
.btn.primary {
  border-color: #2c7ee1;
  background: #2c7ee1;
  color: #fff;
}
.status .btn + .btn {
  margin-left: 9px;
}

/* grid dialog */
.dialog {
  position: absolute;
  top: 48px;
  left: 63px;
  width: 639px;
  border: 1px solid #b9c6d8;
  border-top: 0;
  background: #efefef;
  box-shadow: 3px 3px 5px rgba(0, 0, 0, 0.55);
}
.dialog-bar {
  display: flex;
  justify-content: space-between;
  align-items: center;
  height: 40px;
  margin: 0 -1px;
  padding: 0 15px 0 13px;
  background: #2c7ee1;
  color: #fff;
}
.dialog-body {
  padding: 17px 18px 17px;
}
.check {
  display: grid;
  grid-template-columns: 21px auto;
  column-gap: 4px;
  align-items: center;
  width: max-content;
}
.check input {
  grid-area: 1 / 1;
  width: 21px;
  height: 21px;
  margin: 0;
  border-radius: 3px;
  appearance: none;
  background: #fff;
}
.check input:checked {
  background: #58a5f7;
}
.check svg {
  grid-area: 1 / 1;
  pointer-events: none;
}
fieldset {
  margin: 11px 0 0;
  padding: 5px 16px 17px;
  border: 1px solid #c2c2c2;
  border-radius: 5px;
  background: #fff;
}
legend {
  margin-left: -4px;
  padding: 0 1px 2px;
}
fieldset + fieldset {
  margin-top: 10px;
}
textarea {
  display: block;
  width: 100%;
  height: 66px;
  padding: 7px;
  border: 1px solid #8a8a8a;
  border-radius: 0;
  outline: 0;
  background: #fff;
  color: #1c1c1c;
  font: inherit;
  resize: none;
}
.actions {
  display: flex;
  gap: 9px;
  margin-top: 10px;
}
.actions .btn {
  width: 117px;
}
.actions .btn:first-child {
  margin-right: auto;
}
</style>
